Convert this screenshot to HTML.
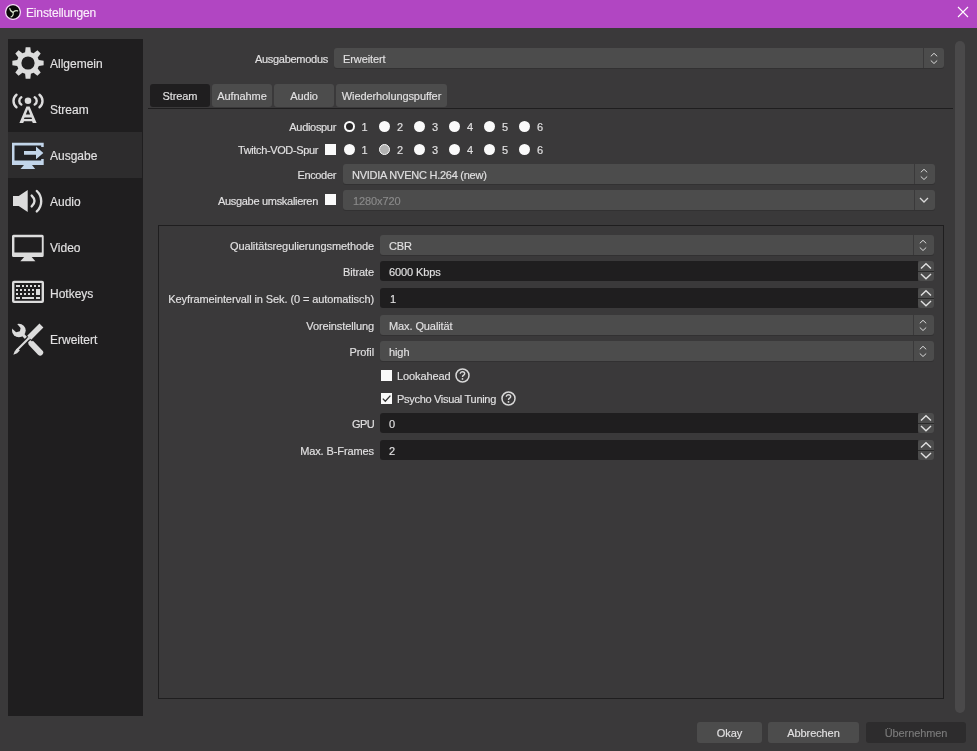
<!DOCTYPE html>
<html><head><meta charset="utf-8">
<style>
*{margin:0;padding:0;box-sizing:border-box}
html,body{-webkit-text-stroke-width:0.15px;width:977px;height:751px;overflow:hidden;background:#3a393a;font-family:"Liberation Sans",sans-serif;font-size:11px;color:#e1e0e1}
.a{position:absolute}
.t{position:absolute;white-space:nowrap;line-height:14px;letter-spacing:-0.1px}
.r{text-align:right}
#title{left:0;top:0;width:977px;height:28px;background:#b146c2}
#side{left:8px;top:39px;width:135px;height:677px;background:#1f1e1f}
.sel{left:8px;top:132px;width:134px;height:46px;background:#2d2c2d}
.si{position:absolute;left:50px;font-size:12px;line-height:14px}
.combo{position:absolute;background:#4c4c4c;border-radius:3px;height:20px;box-shadow:0 1px 0 #323132}
.edit{position:absolute;background:#1f1e1f;border-radius:3px 0 0 3px;height:20px}
.spinb{position:absolute;width:16px;height:20px;background:#4c4c4c;border-radius:3px}
.tab{position:absolute;top:84px;height:23px;background:#4c4c4c;border-radius:3px;text-align:center;line-height:25px;letter-spacing:-0.1px}
.radio{position:absolute;width:11px;height:11px;border-radius:50%;background:#fafafa}
.num{position:absolute;line-height:14px}
.cb{position:absolute;width:11px;height:11px;background:#fafafa}
.btn{position:absolute;top:722px;height:21px;background:#4c4c4c;border-radius:3px;text-align:center;line-height:22px;font-size:11px;letter-spacing:-0.1px}
.sep{position:absolute;width:1px;height:20px;background:#3a393a}
.help{position:absolute;width:15px;height:15px}
</style></head><body><div id="root" style="position:absolute;left:0;top:0;width:977px;height:751px;will-change:transform">
<div id="title" class="a"></div>
<svg class="a" style="left:5px;top:4px" width="16" height="16" viewBox="0 0 16 16"><circle cx="8" cy="8" r="7.4" fill="#0a0a0a" stroke="#f2d4f4" stroke-width="1.3"/><g stroke="#d8e4cc" stroke-width="1.15" fill="none" stroke-linecap="round"><path d="M8 8.3C6.2 7.8 5 6.6 4.8 4.4"/><path d="M8 8.3C9.2 6.8 11 6.2 12.6 6.9"/><path d="M8 8.3C8.6 10.2 7.8 12 6 12.9"/></g></svg>
<div class="t" style="left:26px;top:6px;font-size:12px;color:#fbeefb;letter-spacing:-0.15px">Einstellungen</div>
<svg class="a" style="left:957px;top:6px" width="12" height="12" viewBox="0 0 12 12"><path d="M1 1L11 11M11 1L1 11" stroke="#fff" stroke-width="1.1"/></svg>

<div id="side" class="a"></div>
<div class="a sel"></div>
<!-- sidebar icons -->
<svg class="a" style="left:11px;top:46px" width="34" height="34" viewBox="0 0 34 34"><path d="M14.10 6.18 L14.66 1.37 L19.34 1.37 L19.90 6.18 L22.60 7.30 L26.40 4.30 L29.70 7.60 L26.70 11.40 L27.82 14.10 L32.63 14.66 L32.63 19.34 L27.82 19.90 L26.70 22.60 L29.70 26.40 L26.40 29.70 L22.60 26.70 L19.90 27.82 L19.34 32.63 L14.66 32.63 L14.10 27.82 L11.40 26.70 L7.60 29.70 L4.30 26.40 L7.30 22.60 L6.18 19.90 L1.37 19.34 L1.37 14.66 L6.18 14.10 L7.30 11.40 L4.30 7.60 L7.60 4.30 L11.40 7.30Z" fill="#dcdcdc"/><circle cx="17" cy="17" r="6.6" fill="#1f1e1f"/></svg>
<div class="si" style="top:57px">Allgemein</div>

<svg class="a" style="left:11px;top:92px" width="34" height="34" viewBox="0 0 34 34"><g fill="none" stroke="#dcdcdc" stroke-width="2.4" stroke-linecap="round"><path d="M5.5 2.8A7.9 7.9 0 0 0 5.5 15.2"/><path d="M10.3 5.3A4.3 4.3 0 0 0 10.3 12.6"/><path d="M28.5 2.8A7.9 7.9 0 0 1 28.5 15.2"/><path d="M23.7 5.3A4.3 4.3 0 0 1 23.7 12.6"/></g><circle cx="17" cy="8.8" r="3.3" fill="#dcdcdc"/><path fill="#dcdcdc" fill-rule="evenodd" d="M15.4 14.4H18.6L25.6 31H21.8L21 29.2H13L12.2 31H8.4ZM17 17.3L19.2 22.6H14.8ZM13.56 25.5H20.44L21.07 27H12.93Z"/></svg>
<div class="si" style="top:103px">Stream</div>

<svg class="a" style="left:11px;top:138px" width="34" height="34" viewBox="0 0 34 34"><rect x="3" y="7" width="27.5" height="16" fill="#212226"/><path fill="#c2d5ea" fill-rule="evenodd" d="M1 4.8H32.7V9H30.2V7.5H3.5V22.6H30.2V21H32.7V26.9H1Z"/><path d="M13 26.9H21L24.2 30.9H9.5Z" fill="#c2d5ea"/><path d="M13 13H25V8.5L32.4 14.9L25 21.3V16.8H13Z" fill="#c2d5ea" stroke="#212226" stroke-width="1" paint-order="stroke"/></svg>
<div class="si" style="top:149px">Ausgabe</div>

<svg class="a" style="left:11px;top:184px" width="34" height="34" viewBox="0 0 34 34"><path d="M2 12H7.7L16.7 6.1V28L7.7 22H2Z" fill="#dcdcdc"/><g fill="none" stroke="#dcdcdc" stroke-width="2.4" stroke-linecap="round"><path d="M20.7 11.6Q26.3 17 20.7 22.4"/><path d="M25.8 7A14 14 0 0 1 25.8 27.4"/></g></svg>
<div class="si" style="top:195px">Audio</div>

<svg class="a" style="left:11px;top:230px" width="34" height="34" viewBox="0 0 34 34"><path fill="#dcdcdc" fill-rule="evenodd" d="M2.5 4.8H31.2Q32.7 4.8 32.7 6.3V25.4Q32.7 26.9 31.2 26.9H2.5Q1 26.9 1 25.4V6.3Q1 4.8 2.5 4.8ZM3.4 7.2V22.6H30.8V7.2Z"/><path d="M13.2 26.9H20.7L24.4 31.2H9.3Z" fill="#dcdcdc"/></svg>
<div class="si" style="top:241px">Video</div>

<svg class="a" style="left:11px;top:276px" width="34" height="34" viewBox="0 0 34 34"><path fill="#dcdcdc" fill-rule="evenodd" d="M3 4.8H31Q33 4.8 33 6.8V24.9Q33 26.9 31 26.9H3Q1 26.9 1 24.9V6.8Q1 4.8 3 4.8ZM3.4 7V24.7H30.6V7Z"/><g fill="#dcdcdc"><rect x="5" y="9" width="4" height="2"/><rect x="11" y="9" width="2" height="2"/><rect x="15" y="9" width="2" height="2"/><rect x="19" y="9" width="2" height="2"/><rect x="23" y="9" width="2" height="2"/><rect x="27" y="9" width="2" height="2"/><rect x="5" y="13" width="2" height="2"/><rect x="9" y="13" width="2" height="2"/><rect x="13" y="13" width="2" height="2"/><rect x="17" y="13" width="2" height="2"/><rect x="21" y="13" width="2" height="2"/><rect x="25" y="13" width="4" height="6"/><rect x="5" y="17" width="2" height="2"/><rect x="9" y="17" width="2" height="2"/><rect x="13" y="17" width="2" height="2"/><rect x="17" y="17" width="2" height="2"/><rect x="21" y="17" width="2" height="2"/><rect x="5" y="21" width="4" height="2"/><rect x="11" y="21" width="12" height="2"/><rect x="25" y="21" width="4" height="2"/></g></svg>
<div class="si" style="top:287px">Hotkeys</div>

<svg class="a" style="left:11px;top:322px" width="34" height="34" viewBox="0 0 34 34"><path d="M7.85 8.5L29.5 31" stroke="#dcdcdc" stroke-width="3.2"/><path d="M20.5 21.5L29.2 30.6" stroke="#dcdcdc" stroke-width="6" stroke-linecap="round"/><circle cx="7.85" cy="8.5" r="6.85" fill="#dcdcdc"/><path d="M6.2 2L9.6 6L8.9 9.2L5.1 10.3L1.3 6.8L-3 -3Z" fill="#1f1e1f"/><path d="M30.4 3.6L17.8 16.2" stroke="#1f1e1f" stroke-width="9"/><path d="M17.5 16.5L5 29" stroke="#1f1e1f" stroke-width="4.6"/><path d="M30.4 3.6L18.2 15.8" stroke="#dcdcdc" stroke-width="5.6"/><path d="M18.5 15.5L5.5 28.5" stroke="#dcdcdc" stroke-width="2.2"/><path d="M6.5 26.2L3.8 28.9L2.3 32.7L6.1 31.2L8.8 28.5Z" fill="#dcdcdc"/></svg>
<div class="si" style="top:333px">Erweitert</div>

<!-- scrollbar -->
<div class="a" style="left:955px;top:41px;width:10px;height:672px;background:#4a494a;border-radius:5px"></div>

<!-- Ausgabemodus -->
<div class="t r" style="left:150px;width:178px;top:52px;letter-spacing:-0.28px">Ausgabemodus</div>
<div class="combo" style="left:334px;top:48px;width:610px"></div>
<div class="sep" style="left:923px;top:48px"></div>
<svg class="a" style="left:930px;top:52px" width="8" height="13" viewBox="0 0 8 13"><path d="M0.8 4.3L4 1.3L7.2 4.3M0.8 8.5L4 11.5L7.2 8.5" fill="none" stroke="#d8d8d8" stroke-width="1"/></svg>
<div class="t" style="left:343px;top:52px">Erweitert</div>

<!-- tabs -->
<div class="a" style="left:148px;top:108px;width:805px;height:1px;background:#1f1e1f"></div>
<div class="tab" style="left:150px;width:60px;background:#1f1e1f">Stream</div>
<div class="tab" style="left:212px;width:60px">Aufnahme</div>
<div class="tab" style="left:274px;width:60px">Audio</div>
<div class="tab" style="left:336px;width:111px">Wiederholungspuffer</div>

<!-- audiospur -->
<div class="t r" style="left:150px;width:186px;top:120px;letter-spacing:-0.32px">Audiospur</div>
<div class="radio" style="left:344px;top:121px"><div class="a" style="left:2px;top:2px;width:7px;height:7px;border-radius:50%;background:#262526"></div></div>
<div class="num" style="left:361.5px;top:120px">1</div>
<div class="radio" style="left:379px;top:121px"></div><div class="num" style="left:397px;top:120px">2</div>
<div class="radio" style="left:414px;top:121px"></div><div class="num" style="left:432px;top:120px">3</div>
<div class="radio" style="left:449px;top:121px"></div><div class="num" style="left:467px;top:120px">4</div>
<div class="radio" style="left:484px;top:121px"></div><div class="num" style="left:502px;top:120px">5</div>
<div class="radio" style="left:519px;top:121px"></div><div class="num" style="left:537px;top:120px">6</div>

<!-- twitch -->
<div class="t r" style="left:150px;width:168px;top:143px;letter-spacing:-0.37px">Twitch-VOD-Spur</div>
<div class="cb" style="left:325px;top:144px"></div>
<div class="radio" style="left:344px;top:144px"></div><div class="num" style="left:361.5px;top:143px">1</div>
<div class="radio" style="left:379px;top:144px;background:#b0b0b0;border:1.2px solid #fafafa"></div><div class="num" style="left:397px;top:143px">2</div>
<div class="radio" style="left:414px;top:144px"></div><div class="num" style="left:432px;top:143px">3</div>
<div class="radio" style="left:449px;top:144px"></div><div class="num" style="left:467px;top:143px">4</div>
<div class="radio" style="left:484px;top:144px"></div><div class="num" style="left:502px;top:143px">5</div>
<div class="radio" style="left:519px;top:144px"></div><div class="num" style="left:537px;top:143px">6</div>

<!-- encoder -->
<div class="t r" style="left:150px;width:186px;top:168px;letter-spacing:-0.34px">Encoder</div>
<div class="combo" style="left:343px;top:164px;width:592px"></div>
<div class="sep" style="left:914px;top:164px"></div>
<svg class="a" style="left:920px;top:168px" width="8" height="13" viewBox="0 0 8 13"><path d="M0.8 4.3L4 1.3L7.2 4.3M0.8 8.5L4 11.5L7.2 8.5" fill="none" stroke="#d8d8d8" stroke-width="1"/></svg>
<div class="t" style="left:352px;top:168px;letter-spacing:-0.25px">NVIDIA NVENC H.264 (new)</div>

<!-- umskalieren -->
<div class="t r" style="left:150px;width:168px;top:194px;letter-spacing:-0.3px">Ausgabe umskalieren</div>
<div class="cb" style="left:325px;top:194px"></div>
<div class="combo" style="left:343px;top:190px;width:592px"></div>
<div class="sep" style="left:914px;top:190px"></div>
<svg class="a" style="left:919px;top:195px" width="10" height="10" viewBox="0 0 10 10"><path d="M1 3L5 7L9 3" fill="none" stroke="#d8d8d8" stroke-width="1.3"/></svg>
<div class="t" style="left:353px;top:194px;color:#8a8a8a">1280x720</div>

<!-- group box -->
<div class="a" style="left:158px;top:225px;width:786px;height:474px;border:1px solid #1f1e1f"></div>

<div class="t r" style="left:160px;width:214px;top:239px">Qualitätsregulierungsmethode</div>
<div class="combo" style="left:380px;top:235px;width:554px"></div>
<div class="sep" style="left:913px;top:235px"></div>
<svg class="a" style="left:919px;top:239px" width="8" height="13" viewBox="0 0 8 13"><path d="M0.8 4.3L4 1.3L7.2 4.3M0.8 8.5L4 11.5L7.2 8.5" fill="none" stroke="#d8d8d8" stroke-width="1"/></svg>
<div class="t" style="left:389px;top:239px">CBR</div>

<div class="t r" style="left:160px;width:214px;top:265px">Bitrate</div>
<div class="edit" style="left:380px;top:261px;width:538px"></div>
<div class="spinb" style="left:918px;top:261px"></div><div class="a" style="left:918px;top:271px;width:16px;height:1px;background:#2a2a2a"></div><svg class="a" style="left:919px;top:261px" width="14" height="20" viewBox="0 0 14 20"><path d="M2 7.5L7 2.8L12 7.5M2 13L7 17.7L12 13" fill="none" stroke="#e0e0e0" stroke-width="1.4"/></svg>
<div class="t" style="left:389px;top:265px">6000 Kbps</div>

<div class="t r" style="left:160px;width:214px;top:292px">Keyframeintervall in Sek. (0 = automatisch)</div>
<div class="edit" style="left:380px;top:288px;width:538px"></div>
<div class="spinb" style="left:918px;top:288px"></div><div class="a" style="left:918px;top:298px;width:16px;height:1px;background:#2a2a2a"></div><svg class="a" style="left:919px;top:288px" width="14" height="20" viewBox="0 0 14 20"><path d="M2 7.5L7 2.8L12 7.5M2 13L7 17.7L12 13" fill="none" stroke="#e0e0e0" stroke-width="1.4"/></svg>
<div class="t" style="left:390px;top:292px">1</div>

<div class="t r" style="left:160px;width:214px;top:319px">Voreinstellung</div>
<div class="combo" style="left:380px;top:315px;width:554px"></div>
<div class="sep" style="left:913px;top:315px"></div>
<svg class="a" style="left:919px;top:319px" width="8" height="13" viewBox="0 0 8 13"><path d="M0.8 4.3L4 1.3L7.2 4.3M0.8 8.5L4 11.5L7.2 8.5" fill="none" stroke="#d8d8d8" stroke-width="1"/></svg>
<div class="t" style="left:389px;top:319px">Max. Qualität</div>

<div class="t r" style="left:160px;width:214px;top:345px">Profil</div>
<div class="combo" style="left:380px;top:341px;width:554px"></div>
<div class="sep" style="left:913px;top:341px"></div>
<svg class="a" style="left:919px;top:345px" width="8" height="13" viewBox="0 0 8 13"><path d="M0.8 4.3L4 1.3L7.2 4.3M0.8 8.5L4 11.5L7.2 8.5" fill="none" stroke="#d8d8d8" stroke-width="1"/></svg>
<div class="t" style="left:389px;top:345px">high</div>

<div class="cb" style="left:381px;top:370px"></div>
<div class="t" style="left:397px;top:369px">Lookahead</div>
<svg class="help" style="left:455px;top:368px" viewBox="0 0 15 15"><circle cx="7.5" cy="7.5" r="6.5" fill="none" stroke="#d8d8d8" stroke-width="1.5"/><path d="M5.3 5.8C5.3 4.5 6.3 3.8 7.5 3.8S9.7 4.6 9.7 5.7C9.7 7.2 7.5 7.2 7.5 8.9" fill="none" stroke="#d8d8d8" stroke-width="1.4"/><circle cx="7.5" cy="10.9" r="0.9" fill="#d8d8d8"/></svg>
<div class="cb" style="left:381px;top:393px"></div>
<svg class="a" style="left:381px;top:393px" width="11" height="11" viewBox="0 0 11 11"><path d="M1.8 5.6L4.3 8.2L9.4 2.6" fill="none" stroke="#333" stroke-width="1.3"/></svg>
<div class="t" style="left:397px;top:392px;letter-spacing:-0.3px">Psycho Visual Tuning</div>
<svg class="help" style="left:501px;top:391px" viewBox="0 0 15 15"><circle cx="7.5" cy="7.5" r="6.5" fill="none" stroke="#d8d8d8" stroke-width="1.5"/><path d="M5.3 5.8C5.3 4.5 6.3 3.8 7.5 3.8S9.7 4.6 9.7 5.7C9.7 7.2 7.5 7.2 7.5 8.9" fill="none" stroke="#d8d8d8" stroke-width="1.4"/><circle cx="7.5" cy="10.9" r="0.9" fill="#d8d8d8"/></svg>

<div class="t r" style="left:160px;width:214px;top:417px;letter-spacing:-0.6px">GPU</div>
<div class="edit" style="left:380px;top:413px;width:538px"></div>
<div class="spinb" style="left:918px;top:413px"></div><div class="a" style="left:918px;top:423px;width:16px;height:1px;background:#2a2a2a"></div><svg class="a" style="left:919px;top:413px" width="14" height="20" viewBox="0 0 14 20"><path d="M2 7.5L7 2.8L12 7.5M2 13L7 17.7L12 13" fill="none" stroke="#e0e0e0" stroke-width="1.4"/></svg>
<div class="t" style="left:389px;top:417px">0</div>

<div class="t r" style="left:160px;width:214px;top:444px">Max. B-Frames</div>
<div class="edit" style="left:380px;top:440px;width:538px"></div>
<div class="spinb" style="left:918px;top:440px"></div><div class="a" style="left:918px;top:450px;width:16px;height:1px;background:#2a2a2a"></div><svg class="a" style="left:919px;top:440px" width="14" height="20" viewBox="0 0 14 20"><path d="M2 7.5L7 2.8L12 7.5M2 13L7 17.7L12 13" fill="none" stroke="#e0e0e0" stroke-width="1.4"/></svg>
<div class="t" style="left:389px;top:444px">2</div>

<!-- buttons -->
<div class="btn" style="left:697px;width:65px">Okay</div>
<div class="btn" style="left:768px;width:91px">Abbrechen</div>
<div class="btn" style="left:866px;width:100px;background:#2d2c2d;color:#7a7a7a">Übernehmen</div>
</div></body></html>
